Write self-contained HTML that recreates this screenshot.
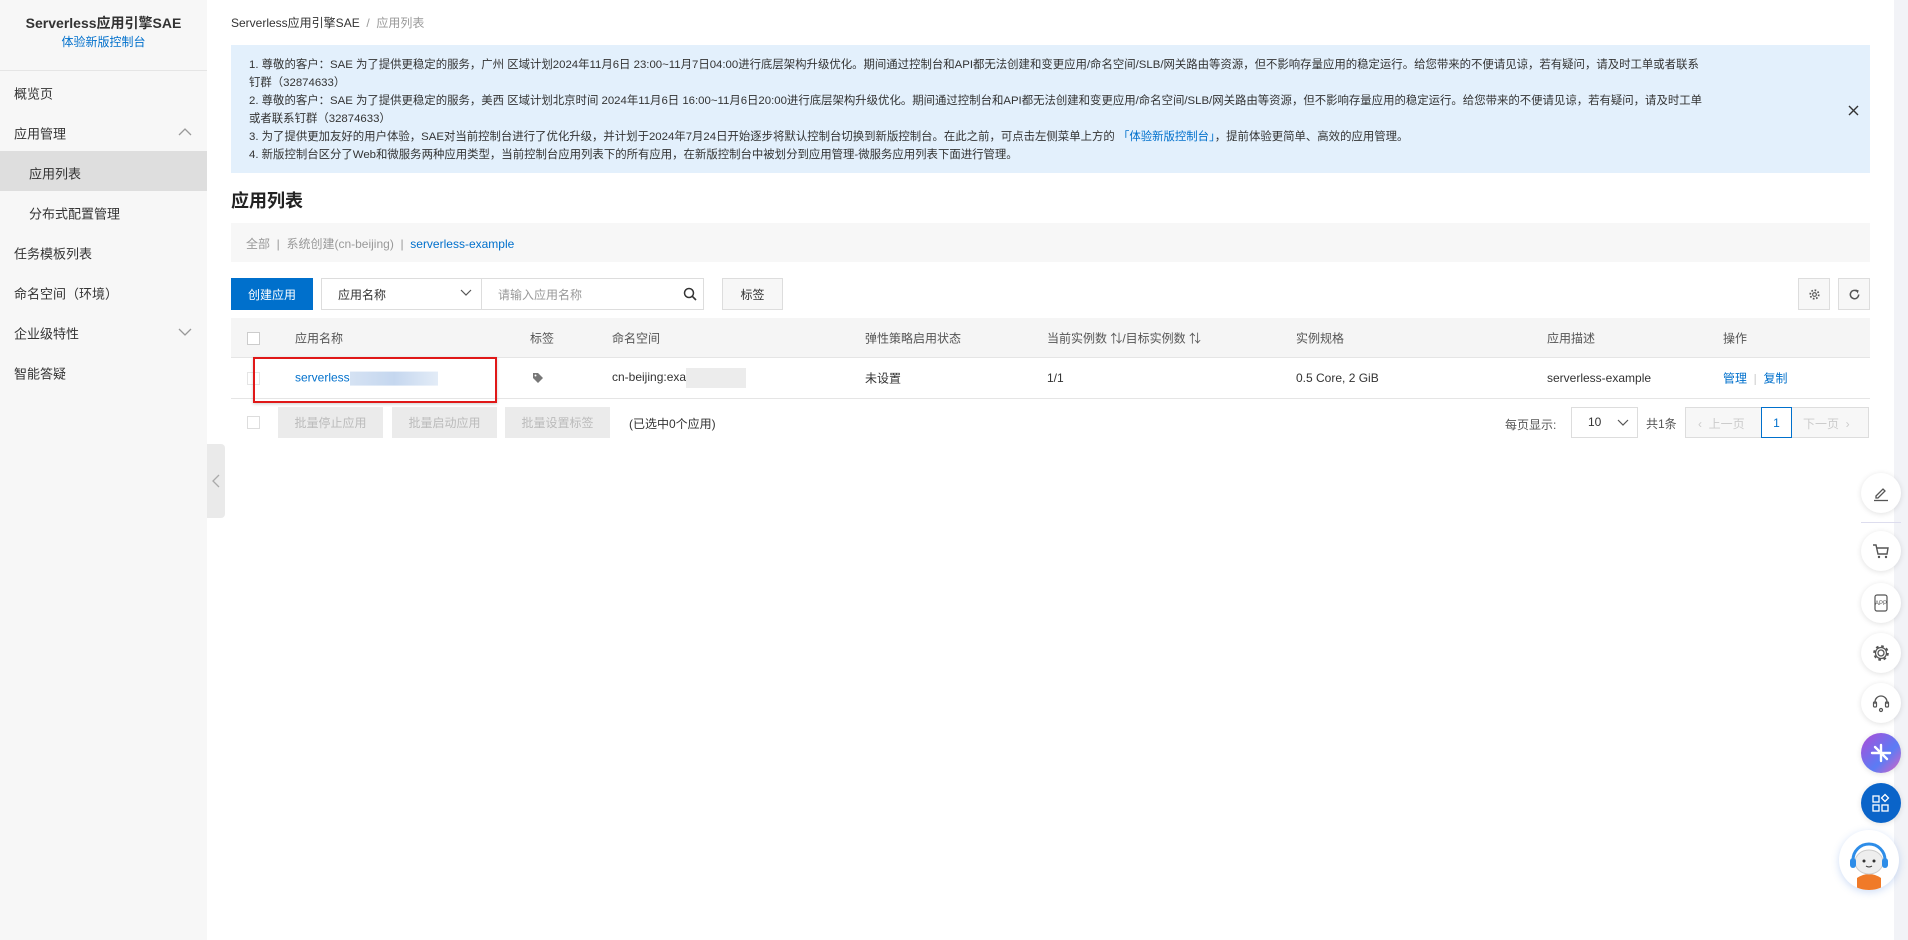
<!DOCTYPE html>
<html><head><meta charset="utf-8"><style>
*{box-sizing:border-box;margin:0;padding:0}
body{width:1908px;height:940px;overflow:hidden;background:#fff;font-family:"Liberation Sans","Noto Sans CJK SC",sans-serif;font-size:12px;color:#333;position:relative}
.a{position:absolute;white-space:nowrap}
.side{position:absolute;left:0;top:0;width:207px;height:940px;background:#f7f7f7}
.mi{position:absolute;left:14px;font-size:13px;color:#333;transform:translateY(-50%)}
.btn{position:absolute;border:1px solid #ddd;background:#f7f7f7;display:flex;align-items:center;justify-content:center;font-size:12px}
.th{position:absolute;top:338px;transform:translateY(-50%);color:#555;white-space:nowrap}
.td{position:absolute;top:378px;transform:translateY(-50%);white-space:nowrap;color:#333}
.blue{color:#0070cc !important}
.fb{position:absolute;left:1861px;width:40px;height:40px;border-radius:50%;background:#fff;box-shadow:0 1px 6px rgba(0,0,0,.12);display:flex;align-items:center;justify-content:center}
.cb{position:absolute;width:13px;height:13px;border:1px solid #ccc;background:#fff}
</style></head><body>
<div class="side">
  <div class="a" style="left:0;width:207px;text-align:center;top:13px;font-size:14px;font-weight:bold;color:#333">Serverless应用引擎SAE</div>
  <div class="a blue" style="left:0;width:207px;text-align:center;top:33px;font-size:12px">体验新版控制台</div>
  <div style="position:absolute;left:0;top:70px;width:207px;height:1px;background:#e5e5e5"></div>
  <div class="mi" style="top:93px">概览页</div>
  <div class="mi" style="top:133px">应用管理</div>
  <svg class="a" style="left:178px;top:127px" width="14" height="10"><path d="M1 8L7 2L13 8" fill="none" stroke="#999" stroke-width="1.3"/></svg>
  <div style="position:absolute;left:0;top:151px;width:207px;height:40px;background:#dedede"></div>
  <div class="mi" style="top:173px;left:29px">应用列表</div>
  <div class="mi" style="top:213px;left:29px">分布式配置管理</div>
  <div class="mi" style="top:253px">任务模板列表</div>
  <div class="mi" style="top:293px">命名空间（环境）</div>
  <div class="mi" style="top:333px">企业级特性</div>
  <svg class="a" style="left:178px;top:327px" width="14" height="10"><path d="M1 2L7 8L13 2" fill="none" stroke="#999" stroke-width="1.3"/></svg>
  <div class="mi" style="top:373px">智能答疑</div>
</div>
<div style="position:absolute;left:207px;top:444px;width:18px;height:74px;background:#eaeaea;border-radius:0 4px 4px 0"></div>
<svg class="a" style="left:211px;top:474px" width="10" height="14"><path d="M8 1L2 7L8 13" fill="none" stroke="#aaa" stroke-width="1.3"/></svg>
<div style="position:absolute;left:1894px;top:0;width:14px;height:940px;background:#f2f3f7"></div>

<div class="a" style="left:231px;top:14px;color:#333">Serverless应用引擎SAE <span style="color:#999">&nbsp;/&nbsp; 应用列表</span></div>
<div style="position:absolute;left:231px;top:45px;width:1639px;height:128px;background:#e3f0fc"></div>
<div class="a" style="left:249px;top:56px;line-height:18px;font-size:11.4px;color:#333">1. 尊敬的客户：SAE 为了提供更稳定的服务，广州 区域计划2024年11月6日 23:00~11月7日04:00进行底层架构升级优化。期间通过控制台和API都无法创建和变更应用/命名空间/SLB/网关路由等资源，但不影响存量应用的稳定运行。给您带来的不便请见谅，若有疑问，请及时工单或者联系<br>钉群（32874633）<br>2. 尊敬的客户：SAE 为了提供更稳定的服务，美西 区域计划北京时间 2024年11月6日 16:00~11月6日20:00进行底层架构升级优化。期间通过控制台和API都无法创建和变更应用/命名空间/SLB/网关路由等资源，但不影响存量应用的稳定运行。给您带来的不便请见谅，若有疑问，请及时工单<br>或者联系钉群（32874633）<br>3. 为了提供更加友好的用户体验，SAE对当前控制台进行了优化升级，并计划于2024年7月24日开始逐步将默认控制台切换到新版控制台。在此之前，可点击左侧菜单上方的 <span class="blue">「体验新版控制台」</span>，提前体验更简单、高效的应用管理。<br>4. 新版控制台区分了Web和微服务两种应用类型，当前控制台应用列表下的所有应用，在新版控制台中被划分到应用管理-微服务应用列表下面进行管理。</div>
<svg class="a" style="left:1848px;top:105px" width="11" height="11"><path d="M1 1L10 10M10 1L1 10" stroke="#333" stroke-width="1.4"/></svg>

<div class="a" style="left:231px;top:187px;font-size:18px;font-weight:bold;color:#222">应用列表</div>
<div style="position:absolute;left:231px;top:223px;width:1639px;height:39px;background:#f7f7f7"></div>
<div class="a" style="left:246px;top:235px;color:#999">全部 &nbsp;| &nbsp;系统创建(cn-beijing) &nbsp;| &nbsp;<span class="blue">serverless-example</span></div>

<div class="a" style="left:231px;top:278px;width:82px;height:32px;background:#0070cc;color:#fff;display:flex;align-items:center;justify-content:center">创建应用</div>
<div style="position:absolute;left:321px;top:278px;width:383px;height:32px;border:1px solid #ddd;background:#fff"></div>
<div style="position:absolute;left:481px;top:278px;width:1px;height:32px;background:#ddd"></div>
<div class="a" style="left:338px;top:286px">应用名称</div>
<svg class="a" style="left:460px;top:289px" width="12" height="8"><path d="M1 1L6 6L11 1" fill="none" stroke="#555" stroke-width="1.2"/></svg>
<div class="a" style="left:498px;top:286px;color:#999">请输入应用名称</div>
<svg class="a" style="left:683px;top:287px" width="14" height="14"><circle cx="6" cy="6" r="4.5" fill="none" stroke="#333" stroke-width="1.5"/><path d="M9.3 9.3L13 13" stroke="#333" stroke-width="1.6"/></svg>
<div class="btn" style="left:722px;top:278px;width:61px;height:32px">标签</div>
<div class="btn" style="left:1798px;top:278px;width:32px;height:32px"><svg width="13" height="13" viewBox="0 0 14 14"><circle cx="7" cy="7" r="2" fill="none" stroke="#555" stroke-width="1.2"/><circle cx="7" cy="7" r="4.6" fill="none" stroke="#555" stroke-width="1.8" stroke-dasharray="1.8 1.8"/></svg></div>
<div class="btn" style="left:1838px;top:278px;width:32px;height:32px"><svg width="13" height="13" viewBox="0 0 14 14"><path d="M11.5 7A4.5 4.5 0 1 1 9.8 3.5" fill="none" stroke="#555" stroke-width="1.6"/><path d="M8 1.5L11.5 2.5L10.5 6Z" fill="#555"/></svg></div>

<div style="position:absolute;left:231px;top:318px;width:1639px;height:40px;background:#f5f5f5;border-bottom:1px solid #e5e5e5"></div>
<div class="cb" style="left:247px;top:332px"></div>
<div class="th" style="left:295px">应用名称</div>
<div class="th" style="left:530px">标签</div>
<div class="th" style="left:612px">命名空间</div>
<div class="th" style="left:865px">弹性策略启用状态</div>
<div class="th" style="left:1047px">当前实例数 ⇅/目标实例数 ⇅</div>
<div class="th" style="left:1296px">实例规格</div>
<div class="th" style="left:1547px">应用描述</div>
<div class="th" style="left:1723px">操作</div>
<div style="position:absolute;left:231px;top:398px;width:1639px;height:1px;background:#e5e5e5"></div>
<div class="cb" style="left:247px;top:372px;border-color:#e5e5e5"></div>
<div class="td blue" style="left:295px">serverless<span style="display:inline-block;width:88px;height:14px;background:linear-gradient(90deg,#d5e2f3,#c5d7ef,#e3ecf7);vertical-align:middle"></span></div>
<svg class="a" style="left:532px;top:372px" width="13" height="12" viewBox="0 0 13 12"><path d="M1 1H6L11 6L6 11L1 6Z" fill="#777"/><circle cx="3.5" cy="3.5" r="1" fill="#fff"/></svg>
<div class="td" style="left:612px">cn-beijing:exa<span style="display:inline-block;width:60px;height:20px;background:#ececec;vertical-align:middle"></span></div>
<div class="td" style="left:865px">未设置</div>
<div class="td" style="left:1047px">1/1</div>
<div class="td" style="left:1296px">0.5 Core, 2 GiB</div>
<div class="td" style="left:1547px">serverless-example</div>
<div class="td blue" style="left:1723px">管理 <span style="color:#ccc">&nbsp;|&nbsp;</span> 复制</div>
<div style="position:absolute;left:253px;top:357px;width:244px;height:46px;border:2px solid #e01818;box-shadow:0 1px 3px rgba(0,0,0,.2)"></div>

<div class="cb" style="left:247px;top:416px;border-color:#ddd"></div>
<div class="btn" style="left:278px;top:407px;width:105px;height:31px;border:none;background:#ebebeb;color:#bbb">批量停止应用</div>
<div class="btn" style="left:392px;top:407px;width:105px;height:31px;border:none;background:#ebebeb;color:#bbb">批量启动应用</div>
<div class="btn" style="left:505px;top:407px;width:105px;height:31px;border:none;background:#ebebeb;color:#bbb">批量设置标签</div>
<div class="a" style="left:629px;top:415px">(已选中0个应用)</div>
<div class="a" style="left:1505px;top:416px;color:#555">每页显示:</div>
<div style="position:absolute;left:1571px;top:407px;width:67px;height:31px;border:1px solid #ddd"></div>
<div class="a" style="left:1588px;top:415px">10</div>
<svg class="a" style="left:1617px;top:419px" width="12" height="8"><path d="M1 1L6 6L11 1" fill="none" stroke="#555" stroke-width="1.2"/></svg>
<div class="a" style="left:1646px;top:415px;color:#555">共1条</div>
<div style="position:absolute;left:1685px;top:407px;width:184px;height:31px;border:1px solid #ddd;background:#f7f7f7"></div>
<div class="a" style="left:1698px;top:415px;color:#ccc">‹ &nbsp;上一页</div>
<div style="position:absolute;left:1761px;top:407px;width:31px;height:31px;border:1px solid #0070cc;background:#fff;color:#0070cc;display:flex;align-items:center;justify-content:center">1</div>
<div class="a" style="left:1803px;top:415px;color:#ccc">下一页 &nbsp;›</div>

<div class="fb" style="top:473px"><svg width="18" height="18" viewBox="0 0 18 18"><path d="M4 12L11 5L13 7L6 14H4Z" fill="none" stroke="#555" stroke-width="1.3"/><path d="M2 16.5H16" stroke="#555" stroke-width="1.3"/></svg></div>
<div style="position:absolute;left:1861px;top:522px;width:40px;height:1px;background:#dde"></div>
<div class="fb" style="top:531px"><svg width="18" height="18" viewBox="0 0 18 18"><path d="M1 3H4L6 12H15L16 6H5" fill="none" stroke="#555" stroke-width="1.4"/><circle cx="7" cy="15" r="1.2" fill="#555"/><circle cx="14" cy="15" r="1.2" fill="#555"/></svg></div>
<div class="fb" style="top:583px"><svg width="18" height="18" viewBox="0 0 18 18"><rect x="3" y="1" width="12" height="16" rx="2" fill="none" stroke="#555" stroke-width="1.2"/><text x="9" y="11" font-size="6" text-anchor="middle" fill="#555" font-family="Liberation Sans">APP</text></svg></div>
<div class="fb" style="top:633px"><svg width="20" height="20" viewBox="0 0 20 20"><circle cx="10" cy="10" r="3" fill="none" stroke="#555" stroke-width="1.3"/><circle cx="10" cy="10" r="6.5" fill="none" stroke="#555" stroke-width="2.6" stroke-dasharray="2.5 2.6"/><circle cx="10" cy="10" r="5.5" fill="none" stroke="#555" stroke-width="1.2"/></svg></div>
<div class="fb" style="top:683px"><svg width="20" height="20" viewBox="0 0 20 20"><path d="M4 11V9A6 6 0 0 1 16 9V11" fill="none" stroke="#555" stroke-width="1.3"/><rect x="2.5" y="9" width="3" height="5" rx="1" fill="none" stroke="#555" stroke-width="1.2"/><rect x="14.5" y="9" width="3" height="5" rx="1" fill="none" stroke="#555" stroke-width="1.2"/><circle cx="10" cy="17" r="1.5" fill="none" stroke="#555" stroke-width="1.2"/></svg></div>
<div class="fb" style="top:733px;background:linear-gradient(135deg,#b04bd6,#5a7cf5 60%,#e060c0)"><svg width="22" height="22" viewBox="0 0 22 22"><path d="M2 11H20M11 3L11 19M5 5L11 11L17 17" stroke="#fff" stroke-width="2.4" stroke-linecap="round"/></svg></div>
<div class="fb" style="top:783px;background:#0a64c9"><svg width="20" height="20" viewBox="0 0 20 20"><rect x="2" y="3" width="6" height="6" fill="none" stroke="#fff" stroke-width="1.3"/><rect x="2" y="12" width="6" height="6" fill="none" stroke="#fff" stroke-width="1.3"/><rect x="11" y="12" width="6" height="6" fill="none" stroke="#fff" stroke-width="1.3"/><path d="M14 1.5L17.5 5L14 8.5L10.5 5Z" fill="none" stroke="#fff" stroke-width="1.3"/></svg></div>
<div style="position:absolute;left:1839px;top:830px;width:60px;height:60px;border-radius:50%;background:#fff;box-shadow:0 2px 8px rgba(60,120,220,.25);overflow:hidden"><svg width="60" height="60" viewBox="0 0 60 60"><path d="M18 60V48Q30 40 42 48V60Z" fill="#f07a28"/><ellipse cx="30" cy="32" rx="14" ry="12" fill="#eee" stroke="#ccc"/><path d="M14 30A16 16 0 0 1 46 30" fill="none" stroke="#2e8de8" stroke-width="3"/><rect x="11" y="28" width="6" height="10" rx="3" fill="#2e8de8"/><rect x="43" y="28" width="6" height="10" rx="3" fill="#2e8de8"/><circle cx="25" cy="31" r="1.5" fill="#333"/><circle cx="35" cy="31" r="1.5" fill="#333"/><path d="M27 36Q30 38 33 36" fill="none" stroke="#333"/></svg></div>
</body></html>
